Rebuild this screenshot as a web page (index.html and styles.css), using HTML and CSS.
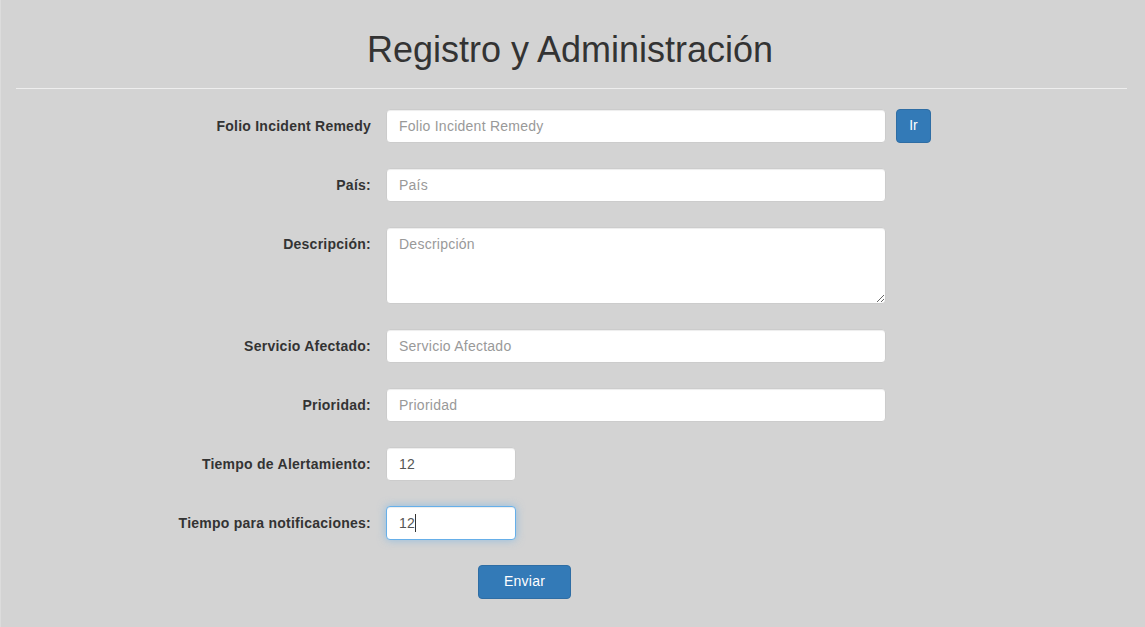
FILE: index.html
```html
<!DOCTYPE html>
<html lang="es">
<head>
<meta charset="utf-8">
<title>Registro y Administración</title>
<link rel="stylesheet" href="styles.css">
</head>
<body>
<div class="page">
  <h1 class="title">Registro y Administración</h1>
  <hr class="divider">
  <form class="form">
    <div class="row">
      <label class="label">Folio Incident Remedy</label>
      <input class="control wide" type="text" placeholder="Folio Incident Remedy">
      <button type="button" class="btn btn-ir">Ir</button>
    </div>
    <div class="row">
      <label class="label">País:</label>
      <input class="control wide" type="text" placeholder="País">
    </div>
    <div class="row">
      <label class="label">Descripción:</label>
      <textarea class="control wide area" placeholder="Descripción"></textarea>
    </div>
    <div class="row">
      <label class="label">Servicio Afectado:</label>
      <input class="control wide" type="text" placeholder="Servicio Afectado">
    </div>
    <div class="row">
      <label class="label">Prioridad:</label>
      <input class="control wide" type="text" placeholder="Prioridad">
    </div>
    <div class="row">
      <label class="label">Tiempo de Alertamiento:</label>
      <input class="control short" type="text" value="12">
    </div>
    <div class="row">
      <label class="label">Tiempo para notificaciones:</label>
      <div class="focus-wrap">
        <input class="control short focused" type="text" value="12">
        <span class="caret"></span>
      </div>
    </div>
    <div class="row submit-row">
      <button type="button" class="btn btn-send">Enviar</button>
    </div>
  </form>
</div>
</body>
</html>
```

FILE: styles.css
```css
* { box-sizing: border-box; }
html, body { margin: 0; padding: 0; }
body {
  background: #d3d3d3;
  font-family: "Liberation Sans", Arial, Helvetica, sans-serif;
  font-size: 14px;
  line-height: 1.42857;
  color: #333;
  width: 1145px;
  height: 627px;
  overflow: hidden;
  border-left: 1px solid #dcdcdc;
}
.page {
  padding: 0 18px 0 15px;
}
.title {
  margin: 30px 0 0;
  font-size: 36px;
  font-weight: 500;
  line-height: 39.6px;
  text-align: center;
  color: #333;
  padding-right: 3px;
}
.divider {
  margin: 18px 0 20px;
  border: 0;
  border-top: 1px solid #eeeeee;
  height: 0;
}
.form {
  display: flex;
  flex-direction: column;
  gap: 25px;
}
.row {
  display: flex;
  align-items: flex-start;
}
.label {
  width: 355px;
  flex: none;
  text-align: right;
  font-weight: bold;
  padding-top: 7px;
  line-height: 20px;
  color: #333;
  letter-spacing: 0.25px;
}
.control {
  display: block;
  margin-left: 15px;
  height: 34px;
  padding: 6px 12px;
  font-family: "Liberation Sans", Arial, Helvetica, sans-serif;
  font-size: 14px;
  line-height: 1.42857;
  color: #555;
  background: #fff;
  border: 1px solid #ccc;
  border-radius: 4px;
  box-shadow: inset 0 1px 1px rgba(0,0,0,.075);
  outline: none;
  letter-spacing: 0.25px;
}
.control::placeholder { color: #999; }
.wide { width: 500px; }
.short { width: 130px; }
.area {
  height: 77px;
  resize: vertical;
  padding-top: 7px;
}
.focus-wrap {
  position: relative;
}
.focused {
  border-color: #66afe9;
  box-shadow: inset 0 1px 1px rgba(0,0,0,.075), 0 0 8px rgba(102,175,233,.6);
}
.caret {
  position: absolute;
  left: 44px;
  top: 8px;
  width: 1px;
  height: 18px;
  background: #333;
}
.btn {
  display: inline-block;
  height: 34px;
  padding: 6px 12px;
  font-family: "Liberation Sans", Arial, Helvetica, sans-serif;
  font-size: 14px;
  line-height: 1.42857;
  color: #fff;
  background: #337ab7;
  border: 1px solid #2e6da4;
  border-radius: 4px;
  cursor: pointer;
}
.btn-ir {
  margin-left: 10px;
  width: 35px;
  padding: 6px 0;
  text-align: center;
}
.submit-row {
  padding-left: 462px;
}
.btn-send {
  width: 93px;
  padding: 6px 0;
  text-align: center;
  letter-spacing: 0.25px;
}
```
